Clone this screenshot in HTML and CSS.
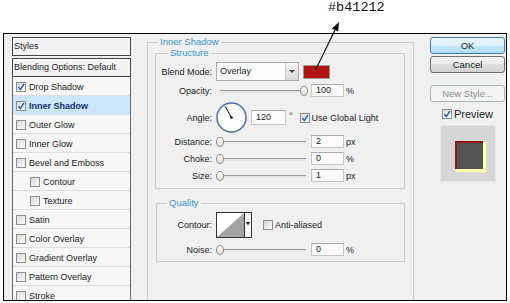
FILE: index.html
```html
<!DOCTYPE html>
<html>
    <head>
        <title>Layer Style</title>
        <link rel="stylesheet" href="styles.css">
    </head>
    <body>
        <div class="note"><span class="hexLabel">#b41212</span></div>
        <svg class="pointer" width="510" height="80" viewBox="0 0 510 80">
            <line x1="315.5" y1="70" x2="335" y2="30" stroke="#111" stroke-width="1.2"/>
            <polygon points="339,22 338.2,31.6 331.9,28.5" fill="#111"/>
        </svg>

        <div class="dialog">
            <div class="styleList">
                <div class="listHead">Styles</div>
                <div class="listHead blendHead">Blending Options: Default</div>
                <div class="listRows">
                    <div class="row"><span class="chk"><svg width="8" height="8"><path d="M1.5 4 L3.3 6.6 L7 1" fill="none" stroke="#2559b5" stroke-width="1.4"/></svg></span>Drop Shadow</div>
                    <div class="row sel"><span class="chk"><svg width="8" height="8"><path d="M1.5 4 L3.3 6.6 L7 1" fill="none" stroke="#2559b5" stroke-width="1.4"/></svg></span>Inner Shadow</div>
                    <div class="row"><span class="chk"></span>Outer Glow</div>
                    <div class="row"><span class="chk"></span>Inner Glow</div>
                    <div class="row"><span class="chk"></span>Bevel and Emboss</div>
                    <div class="row sub"><span class="chk"></span>Contour</div>
                    <div class="row sub"><span class="chk"></span>Texture</div>
                    <div class="row"><span class="chk"></span>Satin</div>
                    <div class="row"><span class="chk"></span>Color Overlay</div>
                    <div class="row"><span class="chk"></span>Gradient Overlay</div>
                    <div class="row"><span class="chk"></span>Pattern Overlay</div>
                    <div class="row"><span class="chk"></span>Stroke</div>
                </div>
            </div>

            <fieldset class="group outer">
                <legend>Inner Shadow</legend>

                <fieldset class="group structure">
                    <legend>Structure</legend>
                    <div class="line blendLine">
                        <span class="lbl">Blend Mode:</span>
                        <div class="select"><span class="selText">Overlay</span><span class="selArrow"></span></div>
                        <div class="swatch"></div>
                    </div>
                    <div class="line field">
                        <span class="lbl">Opacity:</span>
                        <div class="slider"><span class="knob full"></span></div>
                        <div class="num">100</div>
                        <span class="unit">%</span>
                    </div>
                    <div class="line angleLine">
                        <span class="lbl">Angle:</span>
                        <svg class="dial" width="31" height="31">
                            <circle cx="15.5" cy="15.5" r="14.5" fill="#fdfdfd" stroke="#52709c" stroke-width="1.5"/>
                            <line x1="15.5" y1="15.5" x2="9" y2="4.2" stroke="#111"/>
                            <circle cx="15.5" cy="15.5" r="1.3" fill="#111"/>
                        </svg>
                        <div class="num angleNum">120</div>
                        <span class="deg">°</span>
                        <span class="chk globalChk"><svg width="8" height="8"><path d="M1.5 4 L3.3 6.6 L7 1" fill="none" stroke="#2559b5" stroke-width="1.4"/></svg></span>
                        <span class="chkText">Use Global Light</span>
                    </div>
                    <div class="line field spaced">
                        <span class="lbl">Distance:</span>
                        <div class="slider"><span class="knob"></span></div>
                        <div class="num">2</div>
                        <span class="unit">px</span>
                    </div>
                    <div class="line field spaced">
                        <span class="lbl">Choke:</span>
                        <div class="slider"><span class="knob"></span></div>
                        <div class="num">0</div>
                        <span class="unit">%</span>
                    </div>
                    <div class="line field spaced">
                        <span class="lbl">Size:</span>
                        <div class="slider"><span class="knob"></span></div>
                        <div class="num">1</div>
                        <span class="unit">px</span>
                    </div>
                </fieldset>

                <fieldset class="group quality">
                    <legend>Quality</legend>
                    <div class="line contourLine">
                        <span class="lbl">Contour:</span>
                        <svg class="contour" width="36" height="26">
                            <rect x="0.5" y="0.5" width="35" height="25" fill="#fff" stroke="#333"/>
                            <polygon points="1,25 28,1 28,25" fill="#a4a4a4"/>
                            <line x1="28.5" y1="1" x2="28.5" y2="25" stroke="#333"/>
                            <rect x="29" y="1" width="6" height="24" fill="#f6f6f6"/>
                            <polygon points="30,10 34,10 32,13" fill="#111"/>
                        </svg>
                        <span class="chk aliasChk"></span>
                        <span class="chkText">Anti-aliased</span>
                    </div>
                    <div class="line field noiseLine">
                        <span class="lbl">Noise:</span>
                        <div class="slider"><span class="knob"></span></div>
                        <div class="num">0</div>
                        <span class="unit">%</span>
                    </div>
                </fieldset>
            </fieldset>

            <div class="side">
                <div class="btn def">OK</div>
                <div class="btn cancelBtn">Cancel</div>
                <div class="btn off">New Style...</div>
                <div class="previewLine">
                    <span class="chk"><svg width="8" height="8"><path d="M1.5 4 L3.3 6.6 L7 1" fill="none" stroke="#2559b5" stroke-width="1.4"/></svg></span>
                    <span>Preview</span>
                </div>
                <div class="previewBox"><div class="previewSquare"></div></div>
            </div>
        </div>
    </body>
</html>
```

FILE: styles.css
```css
*{
    box-sizing:border-box;
}
body{
    margin:0;
    background:#fff;
    font-family:"Liberation Sans", Arial, sans-serif;
    font-size:9px;
    color:#1b1b1b;
}
.note{
    height:33px;
    padding-left:328px;
}
.hexLabel{
    font-family:"Liberation Mono", "Courier New", monospace;
    font-size:13.5px;
    line-height:15px;
    color:#141414;
}
/* annotation arrow drawn over the dialog */
.pointer{
    position:absolute;
    top:0;
    left:0;
}
.dialog{
    margin-left:3px;
    width:504px;
    height:268px;
    border:1px solid #000;
    background:#f0f0f0;
    display:flex;
    gap:16px;
    padding:3px 0 0 8px;
    overflow:hidden;
}

/* styles list */
.styleList{
    width:119px;
    flex:none;
}
.listHead{
    height:19px;
    border:1px solid #444;
    box-shadow:inset 1px 1px 0 #fff;
    background:#f3f3f3;
    line-height:17px;
    padding-left:1px;
}
.blendHead{
    margin-top:2px;
}
.listRows{
    border-left:1px solid #686868;
    border-right:1px solid #686868;
    background:#f7f7f7;
}
.row{
    height:19px;
    border-bottom:1px solid #dedede;
    display:flex;
    align-items:center;
    gap:3px;
    padding:1px 0 0 3px;
}
.row.sub{
    padding-left:17px;
}
.row.sel{
    background:#cbe7f7;
    font-weight:bold;
    color:#14306e;
}
.chk{
    width:10px;
    height:10px;
    flex:none;
    border:1px solid #8e8f8f;
    background:linear-gradient(135deg,#d9d9d9,#fbfbfb);
    display:flex;
    align-items:center;
    justify-content:center;
}

/* group boxes */
.group{
    margin:0;
    min-width:0;
    border:1px solid #cdcdcd;
}
.group legend{
    padding:0 2px;
    line-height:10px;
    font-size:9.5px;
    color:#3997cf;
}
.outer{
    width:267px;
    flex:none;
    padding:1px 7px 0 7px;
    min-height:300px;
}
.outer > legend{
    margin-left:3px;
}
.structure{
    width:250px;
    padding:4px 0 6px 0;
}
.structure > legend{
    margin-left:12px;
}
.quality{
    width:249px;
    margin:9px 0 0 1px;
    padding:4px 0 5px 0;
}
.quality > legend{
    margin-left:10px;
}
.line{
    display:flex;
    align-items:center;
}
.lbl{
    width:56px;
    flex:none;
    text-align:right;
    margin-right:4px;
}
.quality .lbl{
    width:55px;
}
.blendLine{
    height:19px;
}
.select{
    width:83px;
    height:19px;
    border:1px solid #a9a9a9;
    background:#fcfcfc;
    display:flex;
    align-items:stretch;
}
.selText{
    flex:1;
    padding-left:3px;
    line-height:17px;
}
.selArrow{
    width:13px;
    border-left:1px solid #cacaca;
    background:linear-gradient(#f3f3f3,#d9d9d9);
    display:flex;
    align-items:center;
    justify-content:center;
}
.selArrow::after{
    content:"";
    border-left:3px solid transparent;
    border-right:3px solid transparent;
    border-top:3px solid #444;
}
.swatch{
    margin-left:4px;
    width:27px;
    height:14px;
    background:#b41212;
    border:1px solid #9c9c9c;
}
.field{
    height:13px;
    margin-top:3px;
}
.field.spaced{
    margin-top:4px;
}
.angleLine + .field.spaced{
    margin-top:2px;
}
.slider{
    position:relative;
    width:92px;
    height:10px;
    flex:none;
}
.slider::before{
    content:"";
    position:absolute;
    left:4px;
    width:86px;
    top:4px;
    height:2px;
    border-top:1px solid #9a9a9a;
    background:#e6e6e6;
}
.knob{
    position:absolute;
    left:0;
    top:0;
    width:8px;
    height:10px;
    border:1px solid #8a8a8a;
    border-radius:50%;
    background:linear-gradient(#fff,#dcdcdc);
}
.knob.full{
    left:84px;
}
.num{
    margin-left:3px;
    width:33px;
    height:13px;
    border:1px solid #c6c6c6;
    border-top-color:#a9a9a9;
    background:#fbfbfb;
    padding-left:4px;
    line-height:11px;
}
.unit{
    margin-left:2px;
}
.angleLine{
    height:31px;
    margin-top:5px;
}
.dial{
    flex:none;
}
.angleNum{
    margin-left:4px;
    width:35px;
    height:15px;
    line-height:13px;
}
.deg{
    margin-left:3px;
    margin-top:-4px;
}
.globalChk{
    margin-left:7px;
}
.chkText{
    margin-left:2px;
}
.contourLine{
    height:26px;
}
.contour{
    flex:none;
}
.aliasChk{
    margin-left:11px;
}
.noiseLine{
    margin-top:5px;
}

/* buttons and preview */
.side{
    width:75px;
    flex:none;
    display:flex;
    flex-direction:column;
    align-items:center;
}
.btn{
    width:75px;
    height:17px;
    border:1px solid #707070;
    border-radius:3px;
    background:linear-gradient(#f4f4f4,#ececec 50%,#dfdfdf 50%,#d2d2d2);
    text-align:center;
    line-height:15px;
    font-size:9.5px;
}
.btn.def{
    border-color:#3c7fb1;
    background:linear-gradient(#eaf6fd,#dcf1fc 50%,#c6e8fb 50%,#b2ddf5);
}
.cancelBtn{
    margin-top:2px;
}
.btn.off{
    margin-top:12px;
    color:#8a8a8a;
    border-color:#adb2b5;
    background:#f4f4f4;
}
.previewLine{
    margin-top:7px;
    height:10px;
    display:flex;
    align-items:center;
    gap:2px;
    font-size:11px;
}
.previewBox{
    margin-top:6px;
    width:56px;
    height:57px;
    background:#d6d6d6;
    border:1px solid #e6e6e6;
    display:flex;
    align-items:center;
    justify-content:center;
}
.previewSquare{
    width:28px;
    height:28px;
    margin:2px 0 0 2px;
    background:#545454;
    box-shadow:inset 2px 2px 0 #8e1616, 2px 2px 1px 1px #ffffb0;
}
```
